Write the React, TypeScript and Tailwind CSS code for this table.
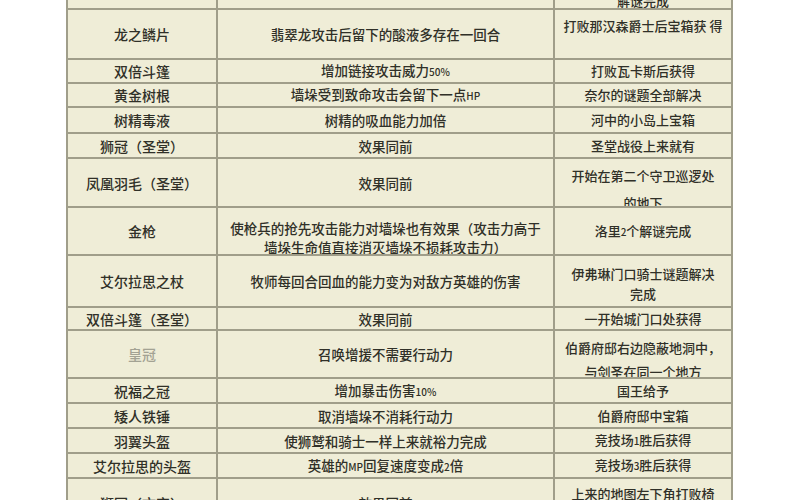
import React from 'react';

type Cell = React.ReactNode;
type Row = {
  h: number;
  a: Cell;
  b: Cell;
  c: Cell;
  aCls?: string;
  bCls?: string;
  cCls?: string;
};

const Sm = ({ children }: { children: React.ReactNode }) => (
  <span className="text-[10px]">{children}</span>
);

const rows: Row[] = [
  { h: 10, a: '', b: '', c: '解谜完成', cCls: 'items-end leading-[14px]' },
  { h: 50, a: '龙之鳞片', b: '翡翠龙攻击后留下的酸液多存在一回合', c: '打败那汉森爵士后宝箱获 得', cCls: 'items-start pt-[6px] leading-[20px]' },
  { h: 24, a: '双倍斗篷', b: <>增加链接攻击威力<Sm>50%</Sm></>, c: '打败瓦卡斯后获得' },
  { h: 24, a: '黄金树根', b: <>墙垛受到致命攻击会留下一点<Sm>HP</Sm></>, c: '奈尔的谜题全部解决' },
  { h: 26, a: '树精毒液', b: '树精的吸血能力加倍', c: '河中的小岛上宝箱' },
  { h: 25, a: '狮冠（圣堂）', b: '效果同前', c: '圣堂战役上来就有' },
  { h: 49, a: '凤凰羽毛（圣堂）', b: '效果同前', c: <>开始在第二个守卫巡逻处<br />的地下</>, cCls: 'items-start pt-[3px] leading-[27px]' },
  {
    h: 48,
    a: '金枪',
    b: <>使枪兵的抢先攻击能力对墙垛也有效果（攻击力高于<br />墙垛生命值直接消灭墙垛不损耗攻击力）</>,
    c: <>洛里<Sm>2</Sm>个解谜完成</>,
    bCls: 'items-start pt-[11px] leading-[19px]',
  },
  { h: 52, a: '艾尔拉思之杖', b: '牧师每回合回血的能力变为对敌方英雄的伤害', c: <>伊弗琳门口骑士谜题解决<br />完成</>, cCls: 'items-center leading-[20px] pt-[6px]' },
  { h: 23, a: '双倍斗篷（圣堂）', b: '效果同前', c: '一开始城门口处获得' },
  { h: 48, a: '皇冠', b: '召唤增援不需要行动力', c: <>伯爵府邸右边隐蔽地洞中，<br />与剑圣在同一个地方</>, aCls: 'items-center leading-[20px] text-[#a3a293]', cCls: 'items-start pt-[5px] leading-[24px]' },
  { h: 25, a: '祝福之冠', b: <>增加暴击伤害<Sm>10%</Sm></>, c: '国王给予' },
  { h: 25, a: '矮人铁锤', b: '取消墙垛不消耗行动力', c: '伯爵府邸中宝箱' },
  { h: 25, a: '羽翼头盔', b: '使狮鹫和骑士一样上来就裕力完成', c: <>竞技场<Sm>1</Sm>胜后获得</> },
  { h: 25, a: '艾尔拉思的头盔', b: <>英雄的<Sm>MP</Sm>回复速度变成<Sm>2</Sm>倍</>, c: <>竞技场<Sm>3</Sm>胜后获得</> },
  { h: 50, a: '狮冠（文字）', b: '效果同前', c: <>上来的地图左下角打败椅<br />子上的骑士</>, cCls: 'items-start pt-[5px] leading-[20px]' },
];

const cellBase = 'flex justify-center text-center overflow-hidden';

export default function App() {
  return (
    <div
      className="w-[800px] h-[500px] overflow-hidden bg-white text-[#303028] font-medium"
      style={{ fontFamily: '"Noto Sans CJK SC", "Noto Sans", sans-serif' }}
    >
      <div className="ml-[66px] w-[667px] border-x-2 border-[#a09e8a] bg-[#efedd7]">
        {rows.map((r, i) => (
          <div
            key={i}
            className="grid grid-cols-[150px_337px_176px] border-b-2 border-[#a09e8a] box-border"
            style={{ height: r.h }}
          >
            <div className={`${cellBase} border-r-2 border-[#a09e8a] text-[14px] ${r.aCls ?? 'items-center leading-[20px]'}`}>
              <span>{r.a}</span>
            </div>
            <div className={`${cellBase} border-r-2 border-[#a09e8a] text-[13.5px] ${r.bCls ?? 'items-center leading-[20px]'}`}>
              <span>{r.b}</span>
            </div>
            <div className={`${cellBase} text-[13px] ${r.cCls ?? 'items-center leading-[20px]'}`}>
              <span>{r.c}</span>
            </div>
          </div>
        ))}
      </div>
    </div>
  );
}
